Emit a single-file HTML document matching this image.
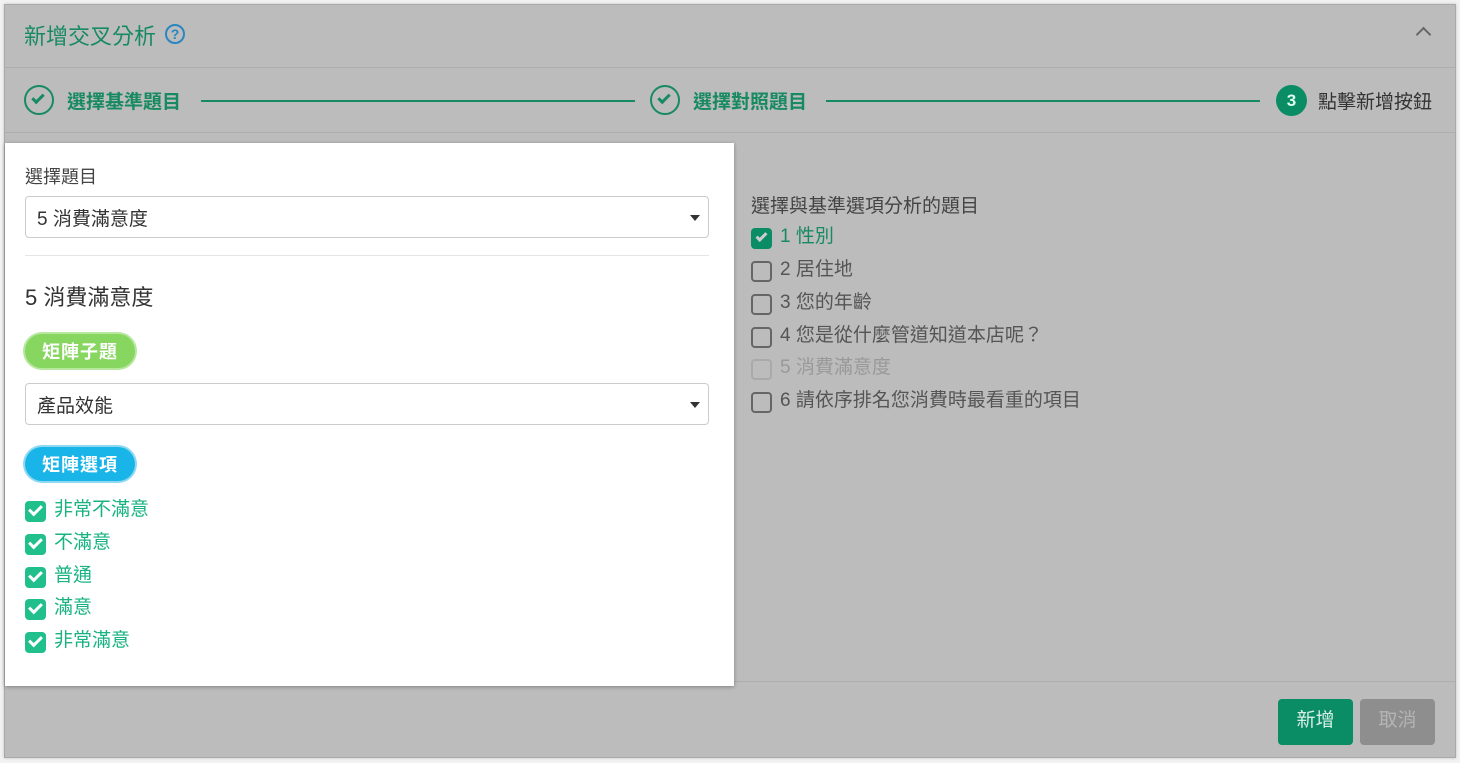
<!DOCTYPE html>
<html><head><meta charset="utf-8"><style>
*{box-sizing:border-box;margin:0;padding:0}
body{width:1460px;height:763px;background:#f2f2f2;font-family:"Liberation Sans","Noto Sans CJK TC",sans-serif;position:relative;overflow:hidden}
.win{position:absolute;left:4px;top:4px;width:1452px;height:754px;background:#bcbcbc;border:1px solid #a9a9a9;box-shadow:0 0 3px rgba(0,0,0,.2)}
.a{position:absolute}
.hl{position:absolute;left:0;right:0;height:1px;background:#adadad}
.circ{position:absolute;width:30px;height:30px;border-radius:50%;border:2px solid #178a62}
.chk{position:absolute;width:12px;height:7px;border-left:3px solid #178a62;border-bottom:3px solid #178a62;transform:rotate(-45deg)}
.green{color:#178a62}
.panel{position:absolute;left:0;top:138px;width:729px;height:543px;background:#fff;box-shadow:0 1px 4px rgba(0,0,0,.3)}
.sel{position:absolute;left:20px;width:684px;height:42px;border:1px solid #ccc;border-radius:4px;font-size:19px;color:#333;padding:7px 11px}
.sel:after{content:"";position:absolute;right:8px;top:18px;border-left:5px solid transparent;border-right:5px solid transparent;border-top:6px solid #333}
.pill{position:absolute;left:20px;height:34px;border-radius:17px;color:#fff;font-size:18px;font-weight:bold;padding:4px 17px;letter-spacing:1px}
.cb{position:absolute;left:20px;font-size:19px;color:#19b382;height:24px;line-height:20px;padding-left:29px}
.cb i{position:absolute;left:0;top:1px;width:21px;height:21px;border-radius:4px;background:#20bf8c}
.cb i:after{content:"";position:absolute;left:4px;top:4px;width:10px;height:5px;border-left:3px solid #fff;border-bottom:3px solid #fff;transform:rotate(-45deg)}
.rc{position:absolute;left:746px;font-size:19px;color:#555;height:24px;line-height:20px;padding-left:29px}
.rc i{position:absolute;left:0;top:1px;width:21px;height:21px;border-radius:4px;border:2px solid #666}
</style></head><body>
<div class="win">
  <div class="a green" style="left:19px;top:14px;font-size:22px">新增交叉分析</div>
  <div class="a" style="left:160px;top:19px;width:20px;height:20px;border-radius:50%;border:2px solid #2a86c0;color:#2a86c0;font-size:14px;font-weight:bold;text-align:center;line-height:16px">?</div>
  <div class="a" style="left:1413px;top:24px;width:11px;height:11px;border-left:2px solid #666;border-top:2px solid #666;transform:rotate(45deg)"></div>
  <div class="hl" style="top:62px"></div>
  <div class="circ" style="left:19px;top:80px"></div>
  <div class="chk" style="left:27px;top:89px"></div>
  <div class="a green" style="left:62px;top:82px;font-size:19px;font-weight:bold">選擇基準題目</div>
  <div class="a" style="left:196px;top:95px;width:434px;height:2px;background:#178a62"></div>
  <div class="circ" style="left:645px;top:80px"></div>
  <div class="chk" style="left:653px;top:89px"></div>
  <div class="a green" style="left:688px;top:82px;font-size:19px;font-weight:bold">選擇對照題目</div>
  <div class="a" style="left:821px;top:95px;width:434px;height:2px;background:#178a62"></div>
  <div class="a" style="left:1271px;top:80px;width:31px;height:31px;border-radius:50%;background:#0a8c64;color:#dfe;font-size:17px;font-weight:bold;text-align:center;line-height:31px">3</div>
  <div class="a" style="left:1313px;top:82px;font-size:19px;color:#333">點擊新增按鈕</div>
  <div class="hl" style="top:127px"></div>

  <div class="a" style="left:746px;top:186px;font-size:19px;color:#444">選擇與基準選項分析的題目</div>
  <div class="rc" style="top:222px;color:#178a62"><i style="background:#0a8c64;border:none"></i><span>1 性別</span></div>
  <div class="a" style="left:751px;top:228px;width:11px;height:6px;border-left:3px solid #ccc;border-bottom:3px solid #ccc;transform:rotate(-45deg)"></div>
  <div class="rc" style="top:255px"><i></i>2 居住地</div>
  <div class="rc" style="top:288px"><i></i>3 您的年齡</div>
  <div class="rc" style="top:321px"><i></i>4 您是從什麼管道知道本店呢？</div>
  <div class="rc" style="top:353px;color:#999"><i style="border-color:#aaa"></i>5 消費滿意度</div>
  <div class="rc" style="top:386px"><i></i>6 請依序排名您消費時最看重的項目</div>

  <div class="hl" style="top:676px"></div>
  <div class="a" style="left:1273px;top:694px;width:75px;height:46px;border-radius:4px;background:#0a8c64;color:#d8eee6;font-size:19px;text-align:center;line-height:44px">新增</div>
  <div class="a" style="left:1355px;top:694px;width:75px;height:46px;border-radius:4px;background:#8e8e8e;color:#b4b4b4;font-size:19px;text-align:center;line-height:44px">取消</div>

  <div class="panel">
    <div class="a" style="left:20px;top:20px;font-size:18px;color:#444">選擇題目</div>
    <div class="sel" style="top:53px">5 消費滿意度</div>
    <div class="a" style="left:20px;top:112px;width:684px;height:1px;background:#e5e5e5"></div>
    <div class="a" style="left:20px;top:137px;font-size:22px;color:#333">5 消費滿意度</div>
    <div class="pill" style="top:191px;background:#86d660;box-shadow:0 0 0 2px #b5e89c">矩陣子題</div>
    <div class="sel" style="top:240px">產品效能</div>
    <div class="pill" style="top:304px;background:#19b5e8;box-shadow:0 0 0 2px #8ed8f2">矩陣選項</div>
    <div class="cb" style="top:357px"><i></i>非常不滿意</div>
    <div class="cb" style="top:390px"><i></i>不滿意</div>
    <div class="cb" style="top:423px"><i></i>普通</div>
    <div class="cb" style="top:455px"><i></i>滿意</div>
    <div class="cb" style="top:488px"><i></i>非常滿意</div>
  </div>
</div>
</body></html>
